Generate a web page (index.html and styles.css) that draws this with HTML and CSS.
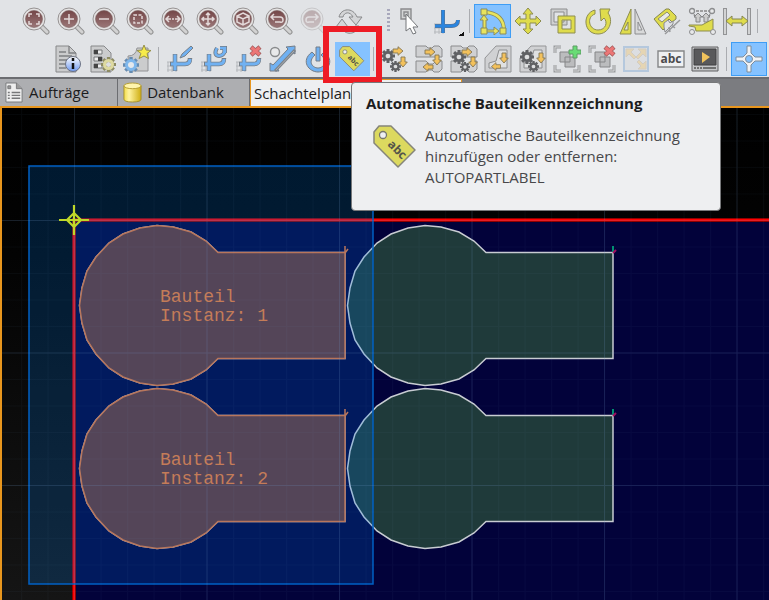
FILE: index.html
```html
<!DOCTYPE html>
<html lang="de">
<head>
<meta charset="utf-8">
<title>Schachtelplan</title>
<link rel="stylesheet" href="styles.css">
</head>
<body>
<svg class="sprite" aria-hidden="true">
  <defs>
    <linearGradient id="glass" x1="0" y1="0" x2="0" y2="1"><stop offset="0" stop-color="#744647"/><stop offset="1" stop-color="#9b7778"/></linearGradient>
    <linearGradient id="gold" x1="0" y1="0" x2="1" y2="0"><stop offset="0" stop-color="#f3dc4a"/><stop offset=".3" stop-color="#fff3a0"/><stop offset="1" stop-color="#cfae12"/></linearGradient>
    <linearGradient id="info" x1="0" y1="0" x2="0" y2="1"><stop offset="0" stop-color="#fff"/><stop offset="1" stop-color="#6f9af0"/></linearGradient>
    <symbol id="lens" viewBox="0 0 28 28">
      <path d="M20 20l5 5" stroke="#929292" stroke-width="5" stroke-linecap="round"/>
      <path d="M20 20l5 5" stroke="#d2d2d2" stroke-width="3" stroke-linecap="round"/>
      <circle cx="12" cy="12" r="11" fill="#e4e2e2" stroke="#969292"/>
      <circle cx="12" cy="12" r="8.5" fill="url(#glass)" stroke="#7c6262" stroke-width=".6"/>
    </symbol>
    <symbol id="gear" viewBox="0 0 16 16">
      <g stroke-width="3.4"><path d="M8 0v16M0 8h16M2.400 2.400l11.200 11.200M13.600 2.400L2.400 13.600" stroke="currentColor"/></g>
      <circle cx="8" cy="8" r="4.200" fill="#dedfe0" stroke="currentColor" stroke-width="3"/>
    </symbol>
    <symbol id="elbow" viewBox="0 0 28 28">
      <path d="M1 17h9M1 21h9M1 25h9M2 17v10M6 17v10M10 17v10" stroke="#b5b8bc" stroke-width="1"/>
      <path d="M9 9v17M4 19h15q5 0 5-6" fill="none" stroke="#777f88" stroke-width="4.500"/>
      <path d="M9 9.500v16M5 19h14q5 0 5-5" fill="none" stroke="#70b1f2" stroke-width="3"/>
    </symbol>
    <symbol id="right" viewBox="0 0 12 10"><path d="M1 3h5V0.700l5 4.300-5 4.300V7H1z" fill="#f3c15c" stroke="#857653" stroke-width=".9"/></symbol>
    <symbol id="down" viewBox="0 0 10 12"><path d="M3 1v5H.7L5 11l4.300-5H7V1z" fill="#f3c15c" stroke="#857653" stroke-width=".9"/></symbol>
    <symbol id="left" viewBox="0 0 12 10"><path d="M11 3H6V0.700L1 5l5 4.300V7h5z" fill="#f3c15c" stroke="#857653" stroke-width=".9"/></symbol>
    <symbol id="shapes" viewBox="0 0 28 28"><path d="M1 1h10l2 2h4l2-2h5l3 3v8H1zM1 16h10l3 3h4l3-3h6v8l-3 3h-5l-2-2h-4l-2 2H1z" fill="#d0d1d3" stroke="#8a8b8d"/></symbol>
    <symbol id="sheet" viewBox="0 0 28 28"><path d="M12 1h15v26H1V13z" fill="#d0d1d3" stroke="#949597"/><path d="M15 5h8v18H5v-5l7-2z" fill="#dfe0e1" stroke="#8d8e90"/></symbol>
    <symbol id="group" viewBox="0 0 28 28">
      <path d="M8 2H2v6M20 26h6v-6M8 26H2v-6" fill="none" stroke="#999b9d" stroke-width="3"/><path d="M8 2H2v6M20 26h6v-6M8 26H2v-6" fill="none" stroke="#d6d7d8"/>
      <path d="M7 7h10v10H7z M12 12h10v10H12z" fill="#bbbcbe" stroke="#858688"/>
    </symbol>
    <symbol id="tag" viewBox="0 0 44 44">
      <path d="M1 7L6 1h12l24 24-17 17L1 18z" fill="#dcd95f" stroke="#85857a" stroke-width="1.500" stroke-linejoin="round"/>
      <circle cx="10" cy="10" r="3.500" fill="#eef0f2" stroke="#77776c" stroke-width="1.300"/>
      <text class="tag-text" x="14" y="20" transform="rotate(45 14 20)">abc</text>
    </symbol>
    <g id="part"><path d="M271 32.500H144L132 21 117 12 99 7 83 5.500 66 8 49 14 35 23 22 37 13 51 8 68 5.500 85.500 8 103 13 120 22 134 35 148 49 157 66 163 83 165.500 99 164 117 159 132 150 144 138.500H271z"/></g>
    <pattern id="fine" width="26.500" height="26.500" patternUnits="userSpaceOnUse"><path d="M0 .5h26.500M.5 0v26.500" stroke="#6aa0d0" stroke-opacity=".045"/></pattern>
    <pattern id="coarse" width="132.500" height="132.500" patternUnits="userSpaceOnUse"><path d="M0 .5h133M.5 0v133" stroke="#6f96c8" stroke-opacity=".16"/></pattern>
    <linearGradient id="night" x1="0" y1="0" x2="0" y2="1"><stop offset="0" stop-color="#000"/><stop offset=".3" stop-color="#030303"/><stop offset="1" stop-color="#151515"/></linearGradient>
  </defs>
</svg>

<header class="toolbars">
  <div class="bar bar-view" role="toolbar" aria-label="Ansicht und Bearbeiten">
    <button class="tool" aria-label="Alles zoomen"><svg viewBox="0 0 28 28"><use href="#lens"/><path d="M7 10V7h3M14 7h3v3M17 14v3h-3M10 17H7v-3" class="mark"/></svg></button>
    <button class="tool" aria-label="Vergrößern"><svg viewBox="0 0 28 28"><use href="#lens"/><path d="M12 7v10M7 12h10" class="mark"/></svg></button>
    <button class="tool" aria-label="Verkleinern"><svg viewBox="0 0 28 28"><use href="#lens"/><path d="M7 12h10" class="mark"/></svg></button>
    <button class="tool" aria-label="Fenster zoomen"><svg viewBox="0 0 28 28"><use href="#lens"/><path d="M8 8h8v8H8z" class="mark" stroke-dasharray="3 1.500"/></svg></button>
    <button class="tool" aria-label="Breite zoomen"><svg viewBox="0 0 28 28"><use href="#lens"/><path d="M5 12h5M11 12h2M14 12h5M8 9l-3 3 3 3M16 9l3 3-3 3" class="mark"/></svg></button>
    <button class="tool" aria-label="Verschieben der Ansicht"><svg viewBox="0 0 28 28"><use href="#lens"/><path d="M12 6v12M6 12h12M10 8l2-2 2 2M10 16l2 2 2-2M8 10l-2 2 2 2M16 10l2 2-2 2" class="mark"/></svg></button>
    <button class="tool" aria-label="3D-Ansicht"><svg viewBox="0 0 28 28"><use href="#lens"/><path d="M12 6l6 3v6l-6 3-6-3V9zM6 9l6 3 6-3M12 12v6" class="mark"/></svg></button>
    <button class="tool" aria-label="Vorherige Ansicht"><svg viewBox="0 0 28 28"><use href="#lens"/><path d="M9 7l-3 3 3 3M6 10h9q3 0 3 3t-3 2h-5" class="mark"/></svg></button>
    <button class="tool" aria-label="Nächste Ansicht" disabled><svg viewBox="0 0 28 28"><use href="#lens"/><path d="M15 7l3 3-3 3M18 10H9q-3 0-3 3t3 2h5" class="mark"/></svg></button>
    <button class="tool" aria-label="Neu aufbauen"><svg viewBox="0 0 28 28"><path d="M4 10C6 1 18 0 22 10h5l-6 8-7-8h4C15 4 9 5 8 10z" fill="#d4d5d7" stroke="#88898b"/><path d="M24 19c-3 9-14 10-18 1H1l6-8 6 8h-3c2 4 8 4 10-1z" fill="#d4d5d7" stroke="#88898b"/></svg></button>
    <span class="grip"></span>
    <button class="tool" aria-label="Auswählen"><svg viewBox="0 0 28 28"><path d="M5 2h10v10H5zM8 5h4v4H8z" fill="#d4d5d6" stroke="#8a8b8d" stroke-width="1.400"/><path d="M10 7v17l4-3 3 6 3-1-3-6h5z" fill="#fff" stroke="#74777a"/></svg></button>
    <button class="tool tool-menu" aria-label="Nullpunkt"><svg viewBox="0 0 28 28"><path d="M1 17h9M1 21h9M1 25h9M2 17v10M6 17v10M10 17v10" stroke="#b5b8bc"/><path d="M10 3v23M2 19h16q7 0 7-6" fill="none" stroke="#657080" stroke-width="4"/><path d="M10 3v23M2 19h16q7 0 7-6" fill="none" stroke="#2a85df" stroke-width="3"/></svg></button>
    <span class="rule"></span>
    <button class="tool is-on" aria-label="Skizze" aria-pressed="true"><svg viewBox="0 0 28 28"><g fill="none"><path d="M5 5q20 1 20 19" stroke="#898b5c" stroke-width="4"/><path d="M5 5q20 1 20 19" stroke="#e8e45e" stroke-width="2.500"/></g><path d="M1 13l4-5 4 5H7v10h8v-3l5 4-5 4v-3H4V13z" fill="#e8e45e" stroke="#898b5c"/><path d="M2 2h6v6H2zM2 21h6v6H2zM21 21h6v6h-6z" fill="#e8e45e" stroke="#898b5c"/></svg></button>
    <button class="tool" aria-label="Verschieben"><svg viewBox="0 0 28 28"><path d="M14 1l5 6h-3v5h6V9l5 5-5 5v-3h-6v6h3l-5 5-5-5h3v-6H6v3l-5-5 5-5v3h6V7H9z" fill="#dfdc4c" stroke="#8d8d50"/></svg></button>
    <button class="tool" aria-label="Kopieren"><svg viewBox="0 0 28 28"><path d="M2 2h16v16H2zM5 5v10h10V5z" fill="#cfd0d1" stroke="#8c8d8f" fill-rule="evenodd"/><path d="M9 9h17v17H9zM13 13v9h9v-9z" fill="#dfdc4c" stroke="#8d8d50" fill-rule="evenodd"/></svg></button>
    <button class="tool" aria-label="Drehen"><svg viewBox="0 0 28 28"><path d="M11 3v4c-9 3-6 16 3 16 8 0 10-8 6-12l-3 3-1-12h10l-2 4c6 8 1 21-10 21C-1 27-2 6 11 3z" fill="#dfdc4c" stroke="#8d8d50" stroke-linejoin="round"/></svg></button>
    <button class="tool" aria-label="Spiegeln"><svg viewBox="0 0 28 28"><path d="M12 2v25H1zM9 15v8H5z" fill="#dfdc4c" stroke="#8d8d50" fill-rule="evenodd"/><path d="M16 2v25h11zM19 15v8h4z" fill="#d8d9da" stroke="#8c8d8f" fill-rule="evenodd"/></svg></button>
    <button class="tool" aria-label="Ausrichten"><svg viewBox="0 0 28 28"><path d="M1 12L13 2h3l7 7v3l-4 3-3-3-3 3v5l-3 3z" fill="#dfdc4c" stroke="#85864f"/><path d="M5 12l9-7 3 3-8 7z" fill="#e8e9ea" stroke="#8d8d70"/><path d="M11 20v-4l4-3 2 3 3-2v3l-8 8z" fill="#e1e3e6" stroke="#8c8d8f"/><path d="M12 27L27 13M17 25l-1-5M22 21l-4-3" fill="none" stroke="#98999b" stroke-width="1.500"/></svg></button>
    <button class="tool" aria-label="Messen"><svg viewBox="0 0 28 28"><path d="M4 4h20M4 4l4 7M24 4l-4 7" stroke="#888" stroke-width="1.500" stroke-dasharray="3 1"/><g fill="#e8e9ea" stroke="#8c8d8f" stroke-width="1.300"><circle cx="4" cy="4" r="2.500"/><circle cx="24" cy="4" r="2.500"/></g><path d="M8 15v-5H6l4-4 4 4h-2v5zM16 15v-5h-2l4-4 4 4h-2v5z" fill="#ccc" stroke="#858688"/><path d="M1 18h13l11-6v12H8l-1-4-6-1z" fill="#dfdc4c" stroke="#8d8d50"/><g fill="#e8e9ea" stroke="#8c8d8f"><circle cx="4" cy="25" r="2.500"/><circle cx="25" cy="25" r="2.500"/></g></svg></button>
    <button class="tool" aria-label="Abstand"><svg viewBox="0 0 28 28"><path d="M2 1v27M26 1v27" stroke="#929395" stroke-width="4"/><path d="M2 2v25M26 2v25" stroke="#d2d3d4" stroke-width="2"/><path d="M3 14l6-5v3h10V9l6 5-6 5v-3H9v3z" fill="#dfdc4c" stroke="#858650"/></svg></button>
    <span class="rule"></span>
  </div>

  <div class="bar bar-parts" role="toolbar" aria-label="Bauteile">
    <button class="tool" aria-label="Information"><svg viewBox="0 0 28 28"><path d="M2 1h13l7 7v19H2z" fill="#cbcccd" stroke="#87888a"/><path d="M15 1v7h7M5 7h7M5 11h13M5 15h8M5 19h7M5 23h7" fill="none" stroke="#7f8082" stroke-width="1.300"/><circle cx="19" cy="19" r="7.500" fill="url(#info)" stroke="#6b7284"/><path d="M19 18v6M19 13v3" stroke="#111" stroke-width="2.500"/></svg></button>
    <button class="tool" aria-label="Eigenschaften"><svg viewBox="0 0 28 28"><path d="M2 1h13l7 7v19H2z" fill="#cbcccd" stroke="#87888a"/><path d="M5 5h8v4H5zM5 12h8v4H5zM5 19h8v4H5z" fill="#eee" stroke="#77787a"/><path d="M5 7h4M9 14h4M5 21h4" stroke="#444" stroke-width="4"/><use href="#gear" x="12" y="12" width="15" height="15" color="#8d8b63"/><circle cx="19.500" cy="19.500" r="4" fill="none" stroke="#dedaa0" stroke-width="3"/></svg></button>
    <button class="tool" aria-label="Neues Bauteil"><svg viewBox="0 0 28 28"><path d="M5 11q8 0 9-8h11v23H6z" fill="#cbcccd" stroke="#929395"/><use href="#gear" x="0" y="12" width="16" height="16" color="#668bb0"/><circle cx="8" cy="20" r="4.500" fill="#e4e8ec" stroke="#7eb7ec" stroke-width="3"/><path d="M21 0l2 5 5 .5-4 3 1.500 5L21 11l-5 2.500 2-5-4-3 5-.5z" fill="#f7ec4a" stroke="#95904a"/></svg></button>
    <span class="rule"></span>
    <button class="tool" aria-label="Anfahrt bearbeiten"><svg viewBox="0 0 28 28"><use href="#elbow"/><path d="M14 13l2-4L25 1l2 2-8 8z" fill="#70b1f2" stroke="#777f88"/></svg></button>
    <button class="tool" aria-label="Anfahrt aktualisieren"><svg viewBox="0 0 28 28"><use href="#elbow"/><path d="M17 3q-4 7 2 8 7-1 5-8M20 3h5v5" fill="none" stroke="#737c86" stroke-width="4"/><path d="M17 3q-4 7 2 8 7-1 5-8M20 3h5v5" fill="none" stroke="#70b1f2" stroke-width="2.500"/></svg></button>
    <button class="tool" aria-label="Anfahrt löschen"><svg viewBox="0 0 28 28"><use href="#elbow"/><path d="M16 2l9 8M25 2l-9 8" stroke="#a35d5d" stroke-width="4.500"/><path d="M16.500 2.500l8 7M24.500 2.500l-8 7" stroke="#ec7676" stroke-width="3"/></svg></button>
    <button class="tool" aria-label="Schnittweg"><svg viewBox="0 0 28 28"><circle cx="6" cy="7" r="4.500" fill="#e8e9ea" stroke="#898b8d" stroke-width="1.400"/><path d="M1 26v-8l3 2L19 4l-2-2 9-1v8l-3-2L8 23l2 3z" fill="#70b1f2" stroke="#747d87"/><path d="M6 26L26 5" stroke="#7d838a" stroke-width="3"/><path d="M7 25L25 6" stroke="#a9adb1"/></svg></button>
    <button class="tool" aria-label="Aktivieren"><svg viewBox="0 0 28 28"><path d="M8 7c-12 9-3 20 6 20s18-11 6-20l-3 3c8 7 2 13-3 13s-11-6-3-13z" fill="#70b1f2" stroke="#747d87"/><path d="M12 2h4v14h-4z" fill="#70b1f2" stroke="#747d87"/></svg></button>
    <div class="tip-anchor">
      <button class="tool is-selected" aria-label="Automatische Bauteilkennzeichnung" aria-describedby="label-tip"><svg viewBox="0 0 28 28"><use href="#tag" x="1" y="1" width="26" height="26"/></svg></button>
      <span class="highlight"></span>
      <section class="tip" id="label-tip" role="tooltip">
        <h2>Automatische Bauteilkennzeichnung</h2>
        <div class="tip-body">
          <svg viewBox="0 0 44 44" aria-hidden="true"><use href="#tag"/></svg>
          <p>Automatische Bauteilkennzeichnung<br>hinzufügen oder entfernen:<br>AUTOPARTLABEL</p>
        </div>
      </section>
    </div>
    <span class="rule"></span>
    <button class="tool" aria-label="Automatisch schachteln"><svg viewBox="0 0 28 28"><use href="#gear" x="0" y="4" width="14" height="14" color="#606164"/><use href="#gear" x="9" y="16" width="11" height="11" color="#606164"/><use href="#right" x="11" y="1" width="12" height="10"/><use href="#down" x="17" y="11" width="10" height="12"/></svg></button>
    <button class="tool" aria-label="Reihenfolge"><svg viewBox="0 0 28 28"><use href="#shapes"/><use href="#right" x="9" y="2" width="12" height="10"/><use href="#down" x="17" y="9" width="10" height="12"/><use href="#left" x="7" y="17" width="12" height="10"/></svg></button>
    <button class="tool" aria-label="Reihenfolge automatisch"><svg viewBox="0 0 28 28"><use href="#shapes"/><use href="#gear" x="2" y="5" width="14" height="14" color="#606164"/><use href="#gear" x="10" y="17" width="10" height="10" color="#606164"/><use href="#right" x="11" y="2" width="12" height="10"/><use href="#down" x="18" y="11" width="10" height="12"/></svg></button>
    <button class="tool" aria-label="Konturfolge"><svg viewBox="0 0 28 28"><use href="#sheet"/><use href="#down" x="15" y="7" width="10" height="12"/><use href="#left" x="6" y="17" width="12" height="9"/></svg></button>
    <button class="tool" aria-label="Konturfolge automatisch"><svg viewBox="0 0 28 28"><use href="#sheet"/><use href="#gear" x="1" y="5" width="14" height="14" color="#606164"/><use href="#gear" x="9" y="16" width="11" height="11" color="#606164"/><use href="#down" x="17" y="7" width="10" height="12"/></svg></button>
    <button class="tool" aria-label="Gruppieren"><svg viewBox="0 0 28 28"><use href="#group"/><path d="M20 1h4v4h4v4h-4v4h-4V9h-4V5h4z" fill="#68dc75" stroke="#5c9b64"/></svg></button>
    <button class="tool" aria-label="Gruppierung aufheben"><svg viewBox="0 0 28 28"><use href="#group"/><path d="M17 2l9 8M26 2l-9 8" stroke="#a35d5d" stroke-width="4.500"/><path d="M17.500 2.500l8 7M25.500 2.500l-8 7" stroke="#ec7676" stroke-width="3"/></svg></button>
    <button class="tool" aria-label="Ausdehnen" disabled><svg viewBox="0 0 28 28"><path d="M2 2h24v24H2z" fill="#d4d7da" stroke="#6597cd" stroke-width="2"/><path d="M4 4h8L9 7l5 5-2 2-5-5-3 3zM24 4v8l-3-3-5 5-2-2 5-5-3-3zM24 24h-8l3-3-4-4 2-2 4 4 3-3z" fill="#efbd55" stroke="#b8a480"/></svg></button>
    <button class="tool" aria-label="Beschriftung"><svg viewBox="0 0 28 28"><path d="M1 6h26v16H1z" fill="#eff0f1" stroke="#858688" stroke-width="1.400"/><text x="14" y="18" class="abc">abc</text></svg></button>
    <button class="tool" aria-label="Simulation"><svg viewBox="0 0 28 28"><path d="M1 2h26v24H1z" fill="#c4c5c7" stroke="#606163"/><path d="M3 4h22v16H3z" fill="#59595b" stroke="#414143"/><path d="M11 7l8 5-8 6z" fill="#f1c35c"/><path d="M3 23h8" stroke="#555" stroke-width="1.500" stroke-dasharray="2 1"/><path d="M12 23h13" stroke="#555" stroke-width="1.500"/></svg></button>
    <span class="rule"></span>
    <button class="tool is-on" aria-label="Ursprung anzeigen" aria-pressed="true"><svg viewBox="0 0 28 28"><path d="M12 1h4v7l4 4h7v4h-7l-4 4v7h-4v-7l-4-4H1v-4h7l4-4z" fill="#f0f2f4" stroke="#7f8c99"/><circle cx="14" cy="14" r="3.500" fill="#85c2ff" stroke="#7f8c99"/></svg></button>
  </div>
</header>

<nav class="tabs" aria-label="Ansichten">
  <a class="tab" href="#auftraege"><svg viewBox="0 0 20 22" aria-hidden="true"><path d="M1 1h11l6 6v14H1z" fill="#eee" stroke="#77787a"/><path d="M12 1v6h6M3 4h3v3H3z" fill="#999" stroke="#77787a"/><path d="M3 11h2M3 14h2M3 17h2M7 11h9M7 14h9M7 17h9" stroke="#77787a" stroke-width="1.500"/></svg>Aufträge</a>
  <a class="tab tab-data" href="#datenbank"><svg viewBox="0 0 20 22" aria-hidden="true"><path d="M1 4v14q0 3 9 3t9-3V4z" fill="url(#gold)" stroke="#a58f2d"/><ellipse cx="10" cy="4" rx="9" ry="3" fill="#fff4ac" stroke="#b39c32"/></svg>Datenbank</a>
  <a class="tab tab-current" href="#plan" aria-current="page">Schachtelplan</a>
</nav>

<main class="canvas" id="plan">
  <svg class="drawing" role="img" aria-label="Schachtelplan mit vier Bauteilen">
    <rect width="100%" height="100%" fill="url(#night)"/>
    <svg x="72" y="112" width="100%" height="100%"><rect width="100%" height="100%" fill="#02023a"/></svg>
    <g transform="translate(72 112)">
      <g class="free">
        <use href="#part"/><use href="#part" y="163"/>
        <use href="#part" x="268"/><use href="#part" x="268" y="163"/>
      </g>
      <path d="M539 32V26M539 195v-6" stroke="#008f70" stroke-width="2"/>
      <path d="M539 33l3-3M539 196l3-3" stroke="#a01060" stroke-width="2"/>
      <path d="M3000 0H0V3000" fill="none" stroke="#900000" stroke-width="4"/>
      <path d="M3000 0H0V3000" fill="none" stroke="#ff0000" stroke-width="2"/>
      <rect x="-45" y="-54" width="344" height="418" fill="#007df0" fill-opacity=".2" stroke="#0060c4" stroke-width="1.500"/>
      <g class="picked">
        <use href="#part"/><use href="#part" y="163"/>
        <path d="M271 33v-7M271 33l3-4M271 196v-7M271 196l3-4"/>
      </g>
      <rect x="-132" y="-133" width="3000" height="3000" fill="url(#fine)"/>
      <rect x="-132" y="-133" width="3000" height="3000" fill="url(#coarse)"/>
      <g class="engraving">
        <text x="86" y="82">Bauteil</text><text x="86" y="101">Instanz: 1</text>
        <text x="86" y="245">Bauteil</text><text x="86" y="264">Instanz: 2</text>
      </g>
      <path d="M0-15V15M-15 0H15M0-7l7 7-7 7-7-7z" fill="none" stroke="#c0d829" stroke-width="2.200"/>
    </g>
  </svg>
</main>
</body>
</html>
```
FILE: styles.css
```css
* { box-sizing: border-box; }

body {
  display: flex;
  flex-direction: column;
  min-height: 100vh;
  margin: 0;
  overflow: hidden;
  background: #000;
  color: #1c1c1e;
  font: 16px/21px "Open Sans", "Noto Sans", sans-serif;
}

.sprite { position: absolute; width: 0; height: 0; }

.toolbars {
  display: flex;
  flex-direction: column;
  gap: 4px;
  padding: 4px 0 1px;
  background: #e1e3e6;
  border-bottom: 2px solid #6c6d71;
}

.bar { display: flex; height: 34px; }
.bar-view { padding: 0 7px 0 19px; }
.bar-parts { padding: 0 2px 0 51px; }

.tool {
  display: flex;
  flex: 1 1 0;
  align-items: center;
  justify-content: center;
  min-width: 0;
  height: 34px;
  padding: 0;
  border: 0;
  background: none;
}
.tool svg { flex: none; width: 28px; height: 28px; fill: none; }
.tool:disabled { opacity: .35; }
.tool.is-on { background: #85c2ff; border: 1px solid #3e9df5; }
.tool.is-selected { background: #85c2ff; }
.tool-menu {
  flex-basis: 4px;
  background: linear-gradient(135deg, transparent 50%, #111 50%) right 2px bottom 2px / 5px 5px no-repeat;
}

.mark { fill: none; stroke: #e3d9d9; stroke-width: 1.5; }

.rule { flex: none; width: 8px; padding: 5px 3px; }
.rule::before { content: ""; display: block; width: 1px; height: 24px; background: #aaacb0; }

.grip { flex: none; width: 27px; padding: 5px 0 0 21px; }
.grip::before {
  content: "";
  display: block;
  width: 3px;
  height: 23px;
  background: repeating-linear-gradient(#a8a8bc 0 2px, transparent 2px 4px);
}

.abc { font: bold 12px "Open Sans", sans-serif; fill: #4b4b4d; text-anchor: middle; }
.tag-text { font: bold 12px "Open Sans", sans-serif; fill: #55554a; }

.tip-anchor { position: relative; z-index: 2; display: flex; flex: 1 1 0; }

.highlight {
  position: absolute;
  inset: -16px -12px -7px -12px;
  border: 6px solid #ee1c25;
  pointer-events: none;
}

.tip {
  position: absolute;
  top: 40px;
  left: 16px;
  width: 370px;
  padding: 10px 14px 22px;
  background: #eeeff1;
  border: 1px solid #77787a;
  border-radius: 4px;
}
.tip h2 { margin: 0 0 11px; font-size: 15px; line-height: 21px; white-space: nowrap; }
.tip-body { display: flex; gap: 8px; padding-left: 7px; }
.tip-body svg { flex: none; width: 44px; height: 44px; fill: none; }
.tip p { margin: 0; font-size: 15px; color: #48484a; white-space: nowrap; }

.tabs {
  display: flex;
  height: 29px;
  background: #7b7c80;
  border-bottom: 2px solid #e8961e;
}
.tab {
  display: flex;
  align-items: center;
  gap: 5px;
  padding: 0 28px 0 5px;
  background: #adaeb1;
  border-right: 1px solid #6c6d71;
  color: inherit;
  font-size: 15px;
  text-decoration: none;
}
.tab-data { padding-right: 25px; }
.tab svg { width: 19px; height: 21px; fill: none; }
.tab-current { flex: 0 0 212px; padding: 0 3px; background: #eeeff1; border: 1px solid #e8961e; border-bottom: 0; }

.canvas { display: flex; flex: 1; border-left: 2px solid #e8961e; }
.drawing { flex: 1; width: 100%; }

.free { fill: #1f3a3a; stroke: #c8ccd2; stroke-width: 1.5; }
.picked { fill: #544558; stroke: #b8765c; stroke-width: 1.5; }
.engraving { fill: #c47c58; font: 18px "Liberation Mono", monospace; white-space: pre; }
```
